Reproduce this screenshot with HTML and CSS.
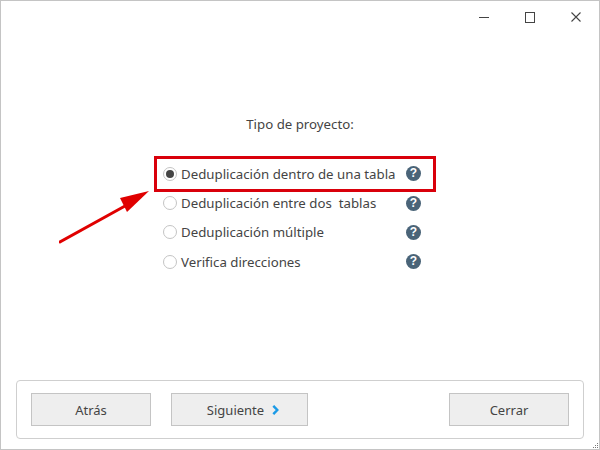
FILE: index.html
```html
<!DOCTYPE html>
<html lang="es">
<head>
<meta charset="utf-8">
<title>Tipo de proyecto</title>
<link rel="stylesheet" href="styles.css">
</head>
<body>
<div class="window">
  <header class="titlebar">
    <svg class="win-icon" width="10" height="1" viewBox="0 0 10 1"><rect width="10" height="1" fill="#444"/></svg>
    <svg class="win-icon" width="10" height="11" viewBox="0 0 10 11"><rect x=".5" y=".5" width="9" height="10" fill="none" stroke="#444"/></svg>
    <svg class="win-icon" width="10" height="10" viewBox="0 0 10 10"><path d="M.5.5l9 9M9.5.5l-9 9" fill="none" stroke="#444" stroke-width="1.1"/></svg>
  </header>
  <main class="content">
    <h1 class="heading">Tipo de proyecto:</h1>
    <ul class="options">
      <li class="option"><span class="radio checked"></span><span class="label">Deduplicación dentro de una tabla</span><span class="help">?</span></li>
      <li class="option"><span class="radio"></span><span class="label">Deduplicación entre dos&nbsp; tablas</span><span class="help">?</span></li>
      <li class="option"><span class="radio"></span><span class="label">Deduplicación múltiple</span><span class="help">?</span></li>
      <li class="option"><span class="radio"></span><span class="label">Verifica direcciones</span><span class="help">?</span></li>
    </ul>
  </main>
  <footer class="footer">
    <button class="btn btn-back">Atrás</button>
    <button class="btn btn-next">Siguiente
      <svg class="chev" width="7" height="10" viewBox="0 0 7 10"><path d="M1.300.8L5.300 5 1.300 9.200" fill="none" stroke="#1a9ae6" stroke-width="2.400"/></svg>
    </button>
    <button class="btn btn-close">Cerrar</button>
  </footer>
  <svg class="grip" width="7" height="7" viewBox="0 0 7 7"><path d="M5 1h1v1H5zM3 3h1v1H3zM5 3h1v1H5zM1 5h1v1H1zM3 5h1v1H3zM5 5h1v1H5z" fill="#777"/></svg>
  <div class="highlight"></div>
  <svg class="arrow" width="100" height="60" viewBox="0 0 100 60"><path d="M0 52.500L66 16" fill="none" stroke="#e00000" stroke-width="3"/><path d="M90 1L61 8 68 22Z" fill="#e00000"/></svg>
</div>
</body>
</html>
```
FILE: styles.css
```css
* { box-sizing: border-box; }
html, body { margin: 0; padding: 0; }
body { width: 600px; height: 450px; overflow: hidden; background: #fff; font-family: "Noto Sans", "Open Sans", sans-serif; color: #444; }
.window { position: relative; width: 600px; height: 450px; border: 1px solid #c4c4c4; display: flex; flex-direction: column; background: #fff; }
.titlebar { display: flex; justify-content: flex-end; align-items: center; height: 32px; padding-right: 18px; gap: 36px; }
.win-icon { display: block; }
.content { flex: 1; display: flex; flex-direction: column; align-items: center; padding-top: 82px; }
.heading { margin: 0; font-size: 13.250px; font-weight: 400; line-height: 18px; color: #444; }
.options { list-style: none; margin: 26px 0 0; padding: 0 0 0 162px; width: 100%; }
.option { display: flex; align-items: center; height: 29.400px; }
.radio { width: 14px; height: 14px; border: 1px solid #c4c4c4; border-radius: 50%; margin-right: 4px; display: flex; align-items: center; justify-content: center; }
.radio.checked::after { content: ""; width: 8px; height: 8px; border-radius: 50%; background: #444; }
.label { font-size: 13.250px; width: 225px; white-space: nowrap; }
.help { width: 15px; height: 15px; border-radius: 50%; background: #4a6478; color: #fff; font-size: 12px; font-weight: 700; line-height: 15px; text-align: center; font-family: "Liberation Sans", sans-serif; }
.footer { display: flex; align-items: center; height: 59px; margin: 0 15px 10px; border: 1px solid #cfcfcf; border-radius: 4px; padding: 0 14px; }
.btn { height: 33px; border: 1px solid #c4c4c4; background: #eee; font: inherit; font-size: 13px; color: #444; padding: 0; display: flex; align-items: center; justify-content: center; gap: 8px; }
.btn-back { width: 120px; margin-right: 20px; }
.btn-next { width: 137px; padding-left: 7px; }
.btn-close { width: 120px; margin-left: auto; }
.chev { display: block; }
.grip { position: absolute; right: 0; bottom: 0; }
.highlight { position: absolute; left: 153px; top: 155px; width: 282px; height: 36px; border: 3px solid #d9000b; }
.arrow { position: absolute; left: 58px; top: 189px; }
```
